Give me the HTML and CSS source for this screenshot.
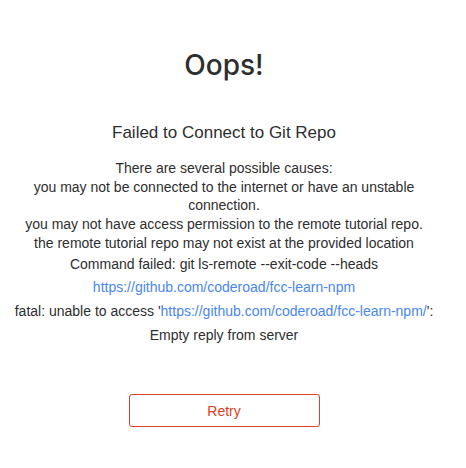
FILE: index.html
```html
<!DOCTYPE html>
<html lang="en">
<head>
  <meta charset="UTF-8">
  <meta name="viewport" content="width=device-width, initial-scale=1.0">
  <title>Error</title>
  <link rel="stylesheet" href="styles.css">
</head>
<body>
  <div class="page">
    <h1 class="title">Oops!</h1>
    <h2 class="subtitle">Failed to Connect to Git Repo</h2>

    <div class="causes">
      <div>There are several possible causes:</div>
      <div>you may not be connected to the internet or have an unstable connection.</div>
      <div>you may not have access permission to the remote tutorial repo.</div>
      <div>the remote tutorial repo may not exist at the provided location</div>
    </div>

    <div class="details">
      <div>Command failed: git ls-remote --exit-code --heads</div>
      <div><a href="#">https://github.com/coderoad/fcc-learn-npm</a></div>
      <div>fatal: unable to access '<a href="#">https://github.com/coderoad/fcc-learn-npm/</a>':</div>
      <div>Empty reply from server</div>
    </div>

    <button class="retry">Retry</button>
  </div>
</body>
</html>
```

FILE: styles.css
```css
body {
  margin: 0;
  padding: 0;
  background-color: #fff;
  color: #2e2e2e;
  font-family: "Liberation Sans", Arial, sans-serif;
}
.page {
  width: 448px;
  padding-top: 48px;
  display: flex;
  flex-direction: column;
  align-items: center;
  text-align: center;
}
.title {
  margin: 0;
  font-family: Inter, "Noto Sans", sans-serif;
  font-size: 28px;
  line-height: 34px;
  font-weight: 500;
}
.subtitle {
  margin: 39px 0 0;
  font-size: 17px;
  line-height: 24px;
  font-weight: 400;
}
.causes {
  margin-top: 14px;
  font-size: 14px;
  line-height: 18.7px;
}
.details {
  font-size: 14px;
  line-height: 23.7px;
}
.details a {
  color: #4a86f0;
  text-decoration: none;
}
.retry {
  margin-top: 47px;
  width: 191px;
  height: 33px;
  border: 1px solid #e0401f;
  border-radius: 3px;
  background: #fff;
  color: #e0401f;
  font-family: "Liberation Sans", Arial, sans-serif;
  font-size: 14px;
  cursor: pointer;
}
```
